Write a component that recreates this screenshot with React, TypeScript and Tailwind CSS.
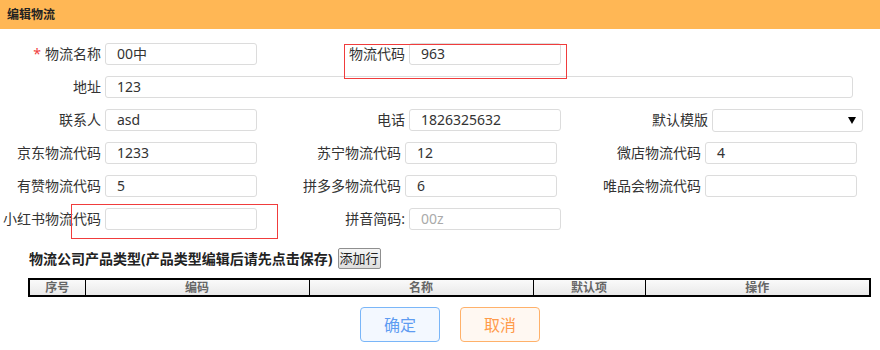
import { ReactNode } from 'react';

const font = "font-['Noto_Sans','Noto_Sans_CJK_SC',sans-serif]";

function Field({
  label,
  labelW,
  inputW = 152,
  value,
  required = false,
  muted = false,
  children,
}: {
  label: string;
  labelW: number;
  inputW?: number;
  value?: string;
  required?: boolean;
  muted?: boolean;
  children?: ReactNode;
}) {
  return (
    <div className="flex items-center h-[22px]">
      <div
        className="text-right pr-[4px] text-[14px] leading-[22px] text-[#333] whitespace-nowrap"
        style={{ width: labelW }}
      >
        {required && <span className="text-[#f04040] mr-[4px]">*</span>}
        {label}
      </div>
      {children ?? (
        <div
          className={`h-[22px] border border-[#dcdcdc] rounded-[3px] bg-white pl-[11px] text-[14px] leading-[20px] ${muted ? 'text-[#aaa]' : 'text-[#333]'}`}
          style={{ width: inputW }}
        >
          {value}
        </div>
      )}
    </div>
  );
}

export default function App() {
  return (
    <div className={`w-[880px] h-[350px] bg-white relative overflow-hidden ${font}`}>
      {/* Header */}
      <div className="h-[29px] bg-[#ffb755] pl-[7px] flex items-center text-[12px] font-bold text-[#222]">
        编辑物流
      </div>

      {/* Form */}
      <div className="pt-[14px] flex flex-col gap-[11px]">
        <div className="flex">
          <div className="w-[300px]"><Field label="物流名称" labelW={105} value="00中" required /></div>
          <div className="w-[300px]"><Field label="物流代码" labelW={109} value="963" /></div>
        </div>
        <div className="flex">
          <Field label="地址" labelW={105} inputW={748} value="123" />
        </div>
        <div className="flex">
          <div className="w-[300px]"><Field label="联系人" labelW={105} value="asd" /></div>
          <div className="w-[300px]"><Field label="电话" labelW={109} value="1826325632" /></div>
          <div className="w-[280px]">
            <Field label="默认模版" labelW={112}>
              <div className="w-[151px] h-[23px] border border-[#dcdcdc] rounded-[3px] bg-white flex items-center justify-end pr-[6px]">
                <span className="w-0 h-0 border-l-[4px] border-r-[4px] border-t-[7px] border-l-transparent border-r-transparent border-t-black" />
              </div>
            </Field>
          </div>
        </div>
        <div className="flex">
          <div className="w-[300px]"><Field label="京东物流代码" labelW={105} value="1233" /></div>
          <div className="w-[300px]"><Field label="苏宁物流代码" labelW={105} value="12" /></div>
          <div className="w-[280px]"><Field label="微店物流代码" labelW={105} value="4" /></div>
        </div>
        <div className="flex">
          <div className="w-[300px]"><Field label="有赞物流代码" labelW={105} value="5" /></div>
          <div className="w-[300px]"><Field label="拼多多物流代码" labelW={105} value="6" /></div>
          <div className="w-[280px]"><Field label="唯品会物流代码" labelW={105} value="" /></div>
        </div>
        <div className="flex">
          <div className="w-[300px]"><Field label="小红书物流代码" labelW={105} value="" /></div>
          <div className="w-[300px]"><Field label="拼音简码:" labelW={109} value="00z" muted /></div>
        </div>
      </div>

      {/* Product types */}
      <div className="mt-[18px] pl-[29px] h-[21px] flex items-center gap-[5px]">
        <span className="text-[14px] font-bold text-[#222] leading-[21px]">物流公司产品类型(产品类型编辑后请先点击保存)</span>
        <button className="h-[21px] px-[1px] border border-[#8f8f8f] rounded-[2px] bg-gradient-to-b from-[#f6f6f6] to-[#dddddd] text-[13px] leading-[19px] text-[#222]">
          添加行
        </button>
      </div>

      <table className="mt-[9px] ml-[28px] w-[843px] border-collapse border-2 border-black">
        <thead>
          <tr className="h-[17px] bg-gradient-to-b from-[#fbfbfb] to-[#e8e8e8] text-[12px] leading-[14px] font-bold text-[#666]">
            <th className="w-[56px] border border-black font-bold">序号</th>
            <th className="w-[224px] border border-black font-bold">编码</th>
            <th className="w-[224px] border border-black font-bold">名称</th>
            <th className="w-[112px] border border-black font-bold">默认项</th>
            <th className="border border-black font-bold">操作</th>
          </tr>
        </thead>
      </table>

      {/* Actions */}
      <div className="mt-[10px] pl-[360px] flex gap-[20px]">
        <button className="w-[80px] h-[35px] border border-[#7ab6f8] rounded-[4px] bg-[#f3f8ff] text-[16px] text-[#5e9cf2]">
          确定
        </button>
        <button className="w-[80px] h-[35px] border border-[#ffb16a] rounded-[4px] bg-[#fff8f2] text-[16px] text-[#ff9b4a]">
          取消
        </button>
      </div>

      {/* Highlight boxes */}
      <div className="absolute left-[344px] top-[44px] w-[223px] h-[35px] border border-[#f03c3c] pointer-events-none" />
      <div className="absolute left-[71px] top-[204px] w-[207px] h-[35px] border border-[#f03c3c] pointer-events-none" />
    </div>
  );
}
